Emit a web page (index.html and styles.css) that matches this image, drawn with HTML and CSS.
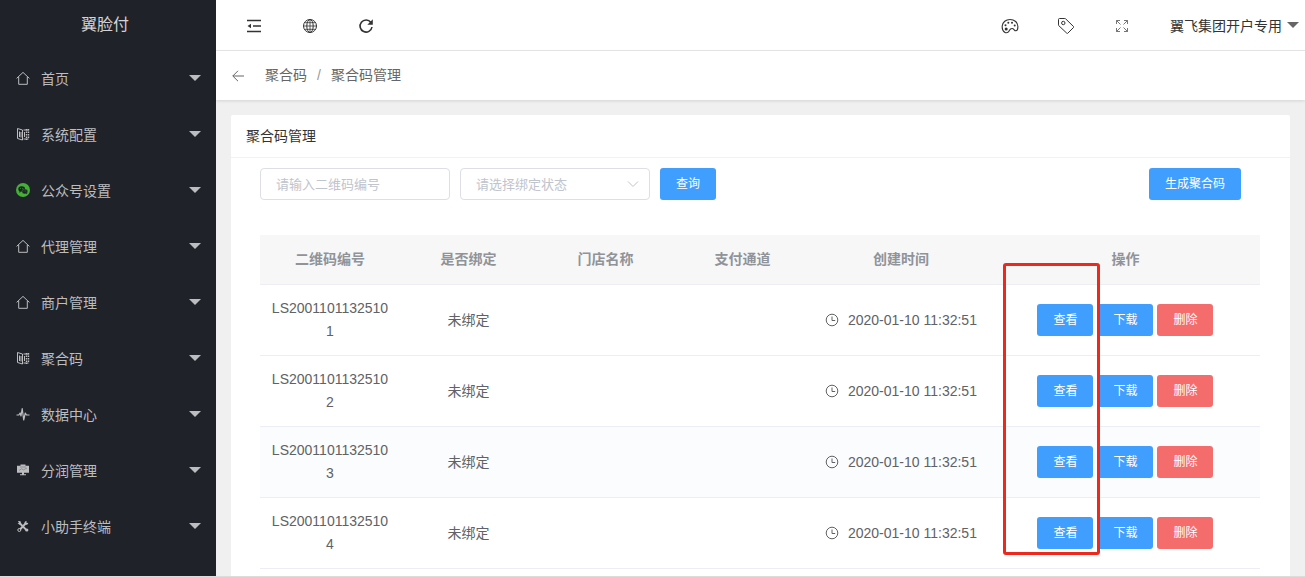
FILE: index.html
```html
<!DOCTYPE html>
<html lang="zh-CN">
<head>
<meta charset="utf-8">
<title>聚合码管理</title>
<link rel="stylesheet" href="styles.css">
</head>
<body>
<svg class="defs" aria-hidden="true">
  <symbol id="home" viewBox="0 0 14 14"><path d="M.6 7.4 7 1.4l6.400 6M2.700 6v7.300h8.600V6" fill="none" stroke="currentColor"/></symbol>
  <symbol id="book" viewBox="0 0 14 14"><path d="M1.500 1.500 6.500 3v10L1.500 11.500zM3.500 4.500v5.500M5 5v5.500" fill="none" stroke="currentColor"/><path d="M7.500 3h5M7.500 12h5M8.500 5v5" fill="none" stroke="currentColor"/><path d="M10.500 2v11M12.500 2v10" fill="none" stroke="currentColor" stroke-width="1.400" stroke-dasharray="1.500 1"/></symbol>
  <symbol id="wechat" viewBox="0 0 14 14"><circle cx="7" cy="7" r="7" fill="#44b035"/><ellipse cx="5.700" cy="6" rx="3.400" ry="2.800" fill="#20222a"/><ellipse cx="8.800" cy="8.500" rx="2.900" ry="2.400" fill="#20222a" stroke="#44b035" stroke-width=".4"/><path d="m3.600 8-.4 1.800 2-1zM10 10.300l1 1 .2-1.600z" fill="#20222a"/><g fill="#44b035"><circle cx="4.600" cy="5.200" r=".5"/><circle cx="6.800" cy="5.200" r=".5"/><circle cx="8" cy="8" r=".4"/><circle cx="9.800" cy="8" r=".4"/></g></symbol>
  <symbol id="pulse" viewBox="0 0 14 14"><path d="M.5 8h2.300l1.300-2 .9 3L6.200 1.500 7.700 13 9.300 6l1.200 2h3" fill="none" stroke="currentColor" stroke-width="1.200" stroke-linejoin="round"/></symbol>
  <symbol id="board" viewBox="0 0 14 14"><path d="M4.500 1.500h5v1.200H13v7H8v1.600h2v1H4v-1h2V9.700H1v-7h3.500z" fill="currentColor"/><path d="m3 7.500 2.500-1.700 2 1L11 5M4 4h6" fill="none" stroke="#6d7078" stroke-width=".6"/></symbol>
  <symbol id="tools" viewBox="0 0 14 14"><path d="m4 4.500 6.500 6.700M10 4 4 10.500" fill="none" stroke="currentColor" stroke-width="1.900"/><path d="M1.800 2.200 4.300 2l1 2.500-1.800 1.300-2-1.500 1.600-.2z" fill="currentColor"/><path d="M12.300 4a2 2 0 0 1-3.400 1.200A2 2 0 0 1 10.600 2L10.400 3.800z" fill="currentColor"/><circle cx="3.300" cy="11" r="1.500" fill="none" stroke="currentColor"/><circle cx="10.800" cy="11" r="1.600" fill="currentColor"/></symbol>
  <symbol id="caret" viewBox="0 0 12 6"><path d="M0 0h12L6 6z" fill="currentColor"/></symbol>
  <symbol id="fold" viewBox="0 0 16 16"><path d="M1 2.500h14M7 8h8M1 13.500h14" fill="none" stroke="currentColor" stroke-width="1.500"/><path d="M1.500 8 5 5.800v4.400z" fill="currentColor"/></symbol>
  <symbol id="globe" viewBox="0 0 16 16"><g fill="none" stroke="currentColor"><circle cx="8" cy="8" r="6.500"/><ellipse cx="8" cy="8" rx="3.200" ry="6.500"/><path d="M8 1.500v13M1.500 8h13M2.500 4.700h11M2.500 11.300h11" stroke-width=".8"/></g></symbol>
  <symbol id="reload" viewBox="0 0 16 16"><path d="M12.900 4.500A6 6 0 1 0 14 9" fill="none" stroke="currentColor" stroke-width="1.600"/><path d="M14.800 1.200V6.700H9.300z" fill="currentColor"/></symbol>
  <symbol id="palette" viewBox="0 0 18 18"><path d="M4 15.400C1.500 14 1 11.500 1.200 9 1.600 5 5 2.500 9 2.500c4.500 0 7.900 3 7.900 7 0 2.400-.8 4.300-2.200 4.300-1.500 0-1.600-2.300-3.700-2.300-2.500 0-2.200 2.200-3.500 3.300-1 .9-2.400 1.200-3.500.6z" fill="none" stroke="currentColor" stroke-width="1.100"/><g fill="currentColor"><circle cx="5.200" cy="12" r="1.500"/><circle cx="4.500" cy="8.300" r="1"/><circle cx="7.300" cy="5.700" r="1"/><circle cx="11" cy="5.700" r="1"/><circle cx="13.700" cy="8.600" r="1"/></g></symbol>
  <symbol id="tag" viewBox="0 0 18 18"><path d="M1.500 2.500q0-1 1-1h5.300q.5 0 .8.300l7.900 7.700q.5.500 0 1l-5.700 5.700q-.5.500-1 0L1.800 8.700q-.3-.3-.3-.8z" fill="none" stroke="currentColor"/><circle cx="6.300" cy="6" r="1.700" fill="none" stroke="currentColor"/></symbol>
  <symbol id="expand" viewBox="0 0 14 14"><path d="M1.500 5V1.500H5M9 1.500h3.500V5M12.500 9v3.500H9M5 12.500H1.500V9M1.500 1.500l4 4M12.500 1.500l-4 4M12.500 12.500l-4-4M1.500 12.500l4-4" fill="none" stroke="currentColor" stroke-width=".9"/></symbol>
  <symbol id="back" viewBox="0 0 12 12"><path d="M12 6H.8M6 .8.800 6 6 11.200" fill="none" stroke="currentColor"/></symbol>
  <symbol id="chevron" viewBox="0 0 12 8"><path d="m1 1.500 5 5 5-5" fill="none" stroke="currentColor"/></symbol>
  <symbol id="clock" viewBox="0 0 14 14"><circle cx="7" cy="7" r="5.800" fill="none" stroke="currentColor"/><path d="M7 3.500V7.500h3.200" fill="none" stroke="currentColor"/></symbol>
</svg>

<div class="app">
  <nav class="sidebar">
    <h1 class="brand">翼脸付</h1>
    <button class="menu-item"><svg class="menu-icon"><use href="#home"/></svg><span class="menu-text">首页</span><svg class="caret"><use href="#caret"/></svg></button>
    <button class="menu-item"><svg class="menu-icon"><use href="#book"/></svg><span class="menu-text">系统配置</span><svg class="caret"><use href="#caret"/></svg></button>
    <button class="menu-item"><svg class="menu-icon"><use href="#wechat"/></svg><span class="menu-text">公众号设置</span><svg class="caret"><use href="#caret"/></svg></button>
    <button class="menu-item"><svg class="menu-icon"><use href="#home"/></svg><span class="menu-text">代理管理</span><svg class="caret"><use href="#caret"/></svg></button>
    <button class="menu-item"><svg class="menu-icon"><use href="#home"/></svg><span class="menu-text">商户管理</span><svg class="caret"><use href="#caret"/></svg></button>
    <button class="menu-item"><svg class="menu-icon"><use href="#book"/></svg><span class="menu-text">聚合码</span><svg class="caret"><use href="#caret"/></svg></button>
    <button class="menu-item"><svg class="menu-icon"><use href="#pulse"/></svg><span class="menu-text">数据中心</span><svg class="caret"><use href="#caret"/></svg></button>
    <button class="menu-item"><svg class="menu-icon"><use href="#board"/></svg><span class="menu-text">分润管理</span><svg class="caret"><use href="#caret"/></svg></button>
    <button class="menu-item"><svg class="menu-icon"><use href="#tools"/></svg><span class="menu-text">小助手终端</span><svg class="caret"><use href="#caret"/></svg></button>
  </nav>

  <div class="page">
    <header class="topbar">
      <button class="tool" aria-label="收起菜单"><svg class="icon-16"><use href="#fold"/></svg></button>
      <button class="tool" aria-label="网站"><svg class="icon-16"><use href="#globe"/></svg></button>
      <button class="tool" aria-label="刷新"><svg class="icon-16"><use href="#reload"/></svg></button>
      <span class="spacer"></span>
      <button class="tool" aria-label="主题"><svg class="icon-18"><use href="#palette"/></svg></button>
      <button class="tool" aria-label="标签"><svg class="icon-18"><use href="#tag"/></svg></button>
      <button class="tool tool-light" aria-label="全屏"><svg class="icon-14"><use href="#expand"/></svg></button>
      <button class="user">翼飞集团开户专用<svg class="caret"><use href="#caret"/></svg></button>
    </header>

    <div class="crumbs">
      <button class="back" aria-label="返回"><svg class="icon-12"><use href="#back"/></svg></button>
      <a class="crumb" href="#">聚合码</a><span class="slash">/</span><a class="crumb" href="#">聚合码管理</a>
    </div>

    <main class="content">
      <section class="card">
        <h2 class="card-title">聚合码管理</h2>
        <div class="card-body">
          <form class="filters">
            <input class="field" type="text" placeholder="请输入二维码编号" aria-label="二维码编号">
            <div class="select-wrap">
              <select class="field field-select" aria-label="绑定状态"><option>请选择绑定状态</option></select>
              <svg class="chevron"><use href="#chevron"/></svg>
            </div>
            <button class="btn" type="button">查询</button>
            <span class="spacer"></span>
            <button class="btn btn-create" type="button">生成聚合码</button>
          </form>
          <div class="table-wrap">
            <table class="table">
              <colgroup><col class="col-code"><col class="col-text"><col class="col-text"><col class="col-text"><col class="col-time"><col class="col-ops"></colgroup>
              <thead><tr><th>二维码编号</th><th>是否绑定</th><th>门店名称</th><th>支付通道</th><th>创建时间</th><th>操作</th></tr></thead>
              <tbody>
                <tr><td>LS20011011325101</td><td>未绑定</td><td></td><td></td><td><span class="time"><svg class="icon-14"><use href="#clock"/></svg>2020-01-10 11:32:51</span></td><td><div class="ops"><button class="btn">查看</button><button class="btn">下载</button><button class="btn btn-danger">删除</button></div></td></tr>
                <tr><td>LS20011011325102</td><td>未绑定</td><td></td><td></td><td><span class="time"><svg class="icon-14"><use href="#clock"/></svg>2020-01-10 11:32:51</span></td><td><div class="ops"><button class="btn">查看</button><button class="btn">下载</button><button class="btn btn-danger">删除</button></div></td></tr>
                <tr class="striped"><td>LS20011011325103</td><td>未绑定</td><td></td><td></td><td><span class="time"><svg class="icon-14"><use href="#clock"/></svg>2020-01-10 11:32:51</span></td><td><div class="ops"><button class="btn">查看</button><button class="btn">下载</button><button class="btn btn-danger">删除</button></div></td></tr>
                <tr><td>LS20011011325104</td><td>未绑定</td><td></td><td></td><td><span class="time"><svg class="icon-14"><use href="#clock"/></svg>2020-01-10 11:32:51</span></td><td><div class="ops"><button class="btn">查看</button><button class="btn">下载</button><button class="btn btn-danger">删除</button></div></td></tr>
              </tbody>
            </table>
            <div class="highlight"></div>
          </div>
        </div>
      </section>
    </main>
  </div>
</div>
</body>
</html>
```
FILE: styles.css
```css
* { box-sizing: border-box; }
body {
  margin: 0;
  font: 14px/23px "Liberation Sans", "Noto Sans CJK SC", sans-serif;
  color: #606266;
  background: #f0f0f0;
}
button, input, select { font-family: inherit; }
button { margin: 0; padding: 0; border: 0; background: none; color: inherit; cursor: pointer; }
svg { display: block; flex: none; }
.defs { position: absolute; width: 0; height: 0; }
.spacer { flex: 1; }
.icon-12 { width: 12px; height: 12px; }
.icon-14 { width: 14px; height: 14px; }
.icon-16 { width: 16px; height: 16px; }
.icon-18 { width: 18px; height: 18px; }
.caret { width: 12px; height: 6px; }

.app { display: flex; min-height: 100vh; border-bottom: 1px solid #dcdcdc; }

.sidebar { flex: none; width: 216px; background: #20222a; color: #bcbdbf; }
.brand {
  margin: 0;
  padding-right: 6px;
  font-size: 16px;
  font-weight: 400;
  line-height: 50px;
  text-align: center;
  color: #d2d3d4;
}
.menu-item {
  display: flex;
  align-items: center;
  gap: 11px;
  width: 100%;
  height: 56px;
  padding: 0 15px 0 16px;
  font-size: 14px;
  text-align: left;
}
.menu-icon { width: 14px; height: 14px; }
.menu-text { flex: 1; }

.page { flex: 1; display: flex; flex-direction: column; min-width: 0; }
.topbar {
  display: flex;
  height: 51px;
  padding: 0 6px 0 10px;
  border-bottom: 1px solid #e8e8e8;
  background: #fff;
  color: #333;
}
.tool { display: flex; align-items: center; justify-content: center; width: 56px; padding-top: 2px; }
.tool-light { color: #666; }
.user { display: flex; align-items: center; gap: 5px; padding-left: 20px; font-size: 14px; }
.user .caret { color: #666; }

.crumbs {
  position: relative;
  display: flex;
  align-items: center;
  height: 49px;
  padding-left: 16px;
  background: #fff;
  color: #666;
  box-shadow: 0 1px 3px rgba(0, 0, 0, .12);
}
.back { margin-right: 21px; }
.crumb { color: inherit; text-decoration: none; }
.slash { padding: 0 10px; color: #999; }

.content { flex: 1; display: flex; padding: 15px 15px 0; }
.card {
  flex: 1;
  min-width: 0;
  border-radius: 2px 2px 0 0;
  background: #fff;
}
.card-title {
  margin: 0;
  padding: 0 15px;
  border-bottom: 1px solid #f2f2f2;
  font-size: 14px;
  font-weight: 400;
  line-height: 42px;
  color: #333;
}
.card-body { padding: 10px 30px 7px 29px; }

.filters { display: flex; gap: 10px; margin-bottom: 35px; padding-right: 19px; }
.field {
  width: 190px;
  height: 32px;
  padding: 0 15px;
  border: 1px solid #dcdfe6;
  border-radius: 4px;
  background: #fff;
  font-size: 13px;
  color: #c0c4cc;
}
.field::placeholder { color: #c0c4cc; opacity: 1; }
.field-select { appearance: none; }
.select-wrap { position: relative; }
.chevron {
  position: absolute;
  top: 12px;
  right: 11px;
  width: 12px;
  height: 8px;
  color: #c0c4cc;
  pointer-events: none;
}
.btn {
  height: 32px;
  padding: 0 16px;
  border-radius: 3px;
  background: #409eff;
  color: #fff;
  font-size: 12px;
  line-height: 32px;
}
.btn-danger { background: #f56c6c; }

.table-wrap { position: relative; }
.table { width: 100%; border-collapse: separate; border-spacing: 0; table-layout: fixed; }
.col-code { width: 14%; }
.col-text { width: 13.7%; }
.col-time { width: 18%; }
.col-ops { width: 26.9%; }
.table th {
  height: 50px;
  padding: 0 10px;
  border-bottom: 1px solid #ebeef5;
  background: #f7f7f7;
  font-weight: 700;
  color: #909399;
}
.table td {
  padding: 12px 10px 12px;
  border-bottom: 1px solid #ebeef5;
  text-align: center;
  word-break: break-all;
}
.striped td { background: #fafcfd; }
.time { display: flex; align-items: center; justify-content: center; gap: 9px; white-space: nowrap; }
.ops { display: flex; justify-content: center; gap: 4px; }
.highlight {
  position: absolute;
  top: 28px;
  right: 160px;
  bottom: 14px;
  width: 97px;
  border: 3px solid #ee281c;
  border-radius: 3px;
  pointer-events: none;
}
```
